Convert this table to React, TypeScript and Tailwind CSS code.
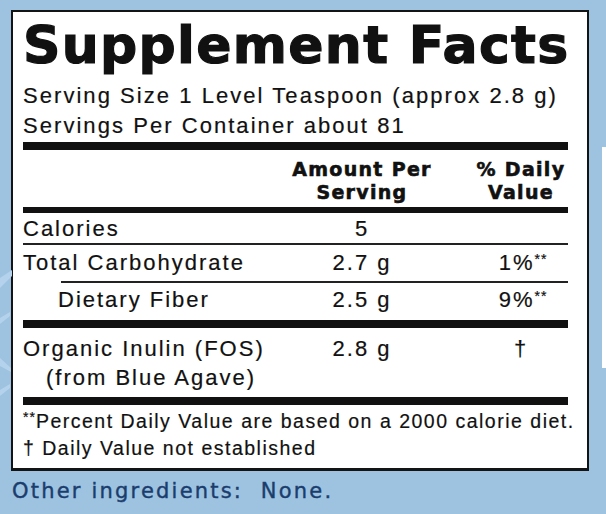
import React from "react";

const BODY = "font-['Liberation_Sans',Arial,sans-serif] [-webkit-text-stroke:0.2px_#111]";
const HEAVY = "font-['DejaVu_Sans',sans-serif] font-bold";

function Cols({
  label,
  amount,
  dv,
  labelClass = "",
}: {
  label: React.ReactNode;
  amount?: React.ReactNode;
  dv?: React.ReactNode;
  labelClass?: string;
}) {
  return (
    <div className="flex">
      <div className={`w-[269px] ${labelClass}`}>{label}</div>
      <div className="w-[140px] text-center">{amount}</div>
      <div className="w-[42px]" />
      <div className="w-[94px] text-center">{dv}</div>
    </div>
  );
}

function Stars() {
  return <sup className="text-[14px] top-[-0.45em] tracking-[1px]">**</sup>;
}

export default function App() {
  return (
    <div className="w-[606px] h-[514px] bg-[#9dc3e1] overflow-hidden relative">
      <svg
        className="absolute left-0 top-[240px]"
        width="12"
        height="170"
        viewBox="0 0 12 170"
      >
        <polygon points="0,38 12,30 12,36 0,48" fill="#b4d2ec" />
        <polygon points="0,78 10,72 10,76 0,84" fill="#b4d2ec" />
        <polygon points="0,118 11,128 11,132 0,126" fill="#b4d2ec" />
        <polygon points="0,150 10,144 10,148 0,156" fill="#b4d2ec" />
      </svg>

      <div className="flex pt-[10px]">
        <div className="w-[11px] shrink-0" />
        <div
          className={`w-[578px] shrink-0 border-2 border-b-[3px] border-[#141414] bg-white pl-[10px] pr-[19px] text-[#111] ${BODY}`}
        >
          {/* Title */}
          <div
            className={`h-[69px] pt-[5px] text-[52px] leading-[56px] tracking-[1.3px] whitespace-nowrap ${HEAVY} [-webkit-text-stroke:1.2px_#111]`}
          >
            Supplement Facts
          </div>

          {/* Serving info */}
          <div className="h-[61px] text-[22px] leading-[30px] tracking-[2.05px] whitespace-nowrap">
            <div>Serving Size 1 Level Teaspoon (approx 2.8 g)</div>
            <div>Servings Per Container about 81</div>
          </div>

          <div className="h-[8px] bg-[#111]" />

          {/* Header */}
          <div
            className={`h-[57px] pt-[8px] text-[19px] leading-[23px] tracking-[1.3px] ${HEAVY} [-webkit-text-stroke:0.6px_#111]`}
          >
            <Cols
              label=""
              amount={
                <>
                  <div className="whitespace-nowrap">Amount Per</div>
                  <div>Serving</div>
                </>
              }
              dv={
                <>
                  <div className="whitespace-nowrap">% Daily</div>
                  <div>Value</div>
                </>
              }
            />
          </div>

          <div className="h-[6px] bg-[#111]" />

          {/* Rows */}
          <div className="text-[22px] tracking-[2px] whitespace-nowrap">
            <div className="h-[32px] pt-[1px] leading-[29px] border-b-2 border-[#222]">
              <Cols label="Calories" amount="5" />
            </div>
            <div className="h-[36px] pt-[3px] leading-[30px]">
              <Cols
                label="Total Carbohydrate"
                amount="2.7 g"
                dv={
                  <span className="pl-[4px]">
                    1%
                    <Stars />
                  </span>
                }
              />
            </div>
            <div className="h-[2px] ml-[38px] bg-[#222]" />
            <div className="h-[37px] pt-[2px] leading-[30px]">
              <Cols
                label="Dietary Fiber"
                labelClass="pl-[35px]"
                amount="2.5 g"
                dv={
                  <span className="pl-[4px]">
                    9%
                    <Stars />
                  </span>
                }
              />
            </div>

            <div className="h-[8px] bg-[#111]" />

            <div className="h-[69px] pt-[6px] leading-[29px]">
              <Cols
                label={
                  <>
                    <div>Organic Inulin (FOS)</div>
                    <div className="pl-[23px]">(from Blue Agave)</div>
                  </>
                }
                amount="2.8 g"
                dv="†"
              />
            </div>

            <div className="h-[8px] bg-[#111]" />
          </div>

          {/* Footnotes */}
          <div className="h-[63px] pt-[3px] text-[19.5px] leading-[27px] tracking-[1.5px] whitespace-nowrap">
            <div>
              <sup className="text-[14px] top-[-0.45em] tracking-[1px]">**</sup>
              Percent Daily Value are based on a 2000 calorie diet.
            </div>
            <div>† Daily Value not established</div>
          </div>
        </div>
        <div className="ml-[13px] mt-[137px] w-[4px] h-[221px] bg-white shrink-0" />
      </div>

      <div className="pl-[12px] mt-[8px] text-[21px] leading-[24px] tracking-[2.2px] text-[#1b3d6d] font-['DejaVu_Sans',sans-serif] [-webkit-text-stroke:0.4px_#1b3d6d] whitespace-pre">
        {"Other ingredients:  None."}
      </div>
    </div>
  );
}
